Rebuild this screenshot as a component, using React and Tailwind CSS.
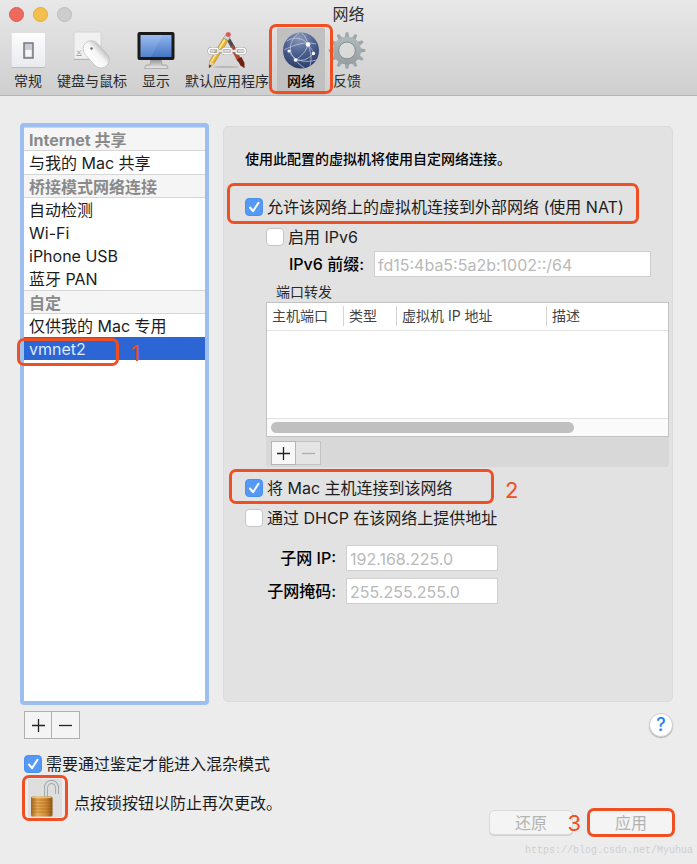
import React, { useId } from "react";

const FONT = "font-[Inter,'Noto_Sans_CJK_SC',sans-serif]";

function Mark({ className }) {
  return (
    <span
      aria-hidden="true"
      className={`pointer-events-none absolute rounded-[7px] border-[3px] border-[#f04e23] ${className}`}
    />
  );
}

function SwitchIcon() {
  return (
    <svg width="36" height="38" viewBox="0 0 36 38">
      <defs>
        <linearGradient id="sw" x1="0" y1="0" x2="0" y2="1">
          <stop offset="0" stopColor="#fcfcfd" />
          <stop offset="1" stopColor="#e9ebef" />
        </linearGradient>
      </defs>
      <rect x="1.5" y="3" width="33.5" height="34" rx="1" fill="#bdbdbd" />
      <rect x="1.5" y="2" width="33.5" height="34" rx="1" fill="url(#sw)" />
      <rect x="14" y="12" width="9" height="15" fill="#c9ccd4" stroke="#77777c" strokeWidth="1.5" />
      <rect x="15.5" y="19" width="6" height="6.5" fill="#f6f6f8" />
    </svg>
  );
}

function MouseIcon() {
  return (
    <svg width="38" height="38" viewBox="0 0 38 38">
      <defs>
        <linearGradient id="ms" x1="0" y1="0" x2="1" y2="0">
          <stop offset="0" stopColor="#ffffff" />
          <stop offset="0.6" stopColor="#f4f4f4" />
          <stop offset="1" stopColor="#c4c4c4" />
        </linearGradient>
      </defs>
      <rect x="1" y="1" width="27" height="27" rx="1.5" fill="#f1f1f1" stroke="#d4d4d4" />
      <path d="M1 28.500h27" stroke="#b5b5b5" />
      <path d="M4 19.5l4 4M8 19.5l-4 4M3.500 24.500h5" stroke="#8c8c8c" strokeWidth="0.8" />
      <rect x="15" y="8" width="16.5" height="31" rx="8.2" transform="rotate(-42 23 23.5)" fill="url(#ms)" stroke="#bdbdbd" strokeWidth="0.7" />
      <circle cx="18.5" cy="17.5" r="1.2" fill="#666" />
    </svg>
  );
}

function DisplayIcon() {
  return (
    <svg width="38" height="38" viewBox="0 0 38 38">
      <defs>
        <linearGradient id="dp" x1="0" y1="0" x2="0" y2="1">
          <stop offset="0" stopColor="#8fb6ee" />
          <stop offset="1" stopColor="#4474c4" />
        </linearGradient>
        <linearGradient id="ds" x1="0" y1="0" x2="0" y2="1">
          <stop offset="0" stopColor="#8e8e8e" />
          <stop offset="1" stopColor="#eeeeee" />
        </linearGradient>
      </defs>
      <path d="M14 28h10l1 6h4.500l1.500 3.500H7.500L9 34h4z" fill="url(#ds)" stroke="#9a9a9a" strokeWidth="0.7" />
      <rect x="0.500" y="1" width="37" height="28" rx="2" fill="#1a1a1a" />
      <rect x="3.500" y="4" width="31" height="22" fill="url(#dp)" />
      <path d="M3.500 4h22L14 26H3.500z" fill="#fff" opacity="0.1" />
    </svg>
  );
}

function AppsIcon() {
  return (
    <svg width="42" height="38" viewBox="0 0 42 38">
      <ellipse cx="20" cy="36" rx="13" ry="1" fill="#b8b8b8" />
      <path d="M20 7.500l3-2 9.500 16.500-3.500 2z" fill="#4a4b50" />
      <path d="M24 16l3-2 9 15-4.500 1.500z" fill="#b0472e" />
      <path d="M31 28.500l4.500-2.500 3 6v5.200l-4-2.700z" fill="#6d2013" />
      <path d="M17.500 7l4.500 2.500L8 32.500 3 37l.7-7z" fill="#e6b42e" stroke="#9c7020" strokeWidth="0.5" />
      <path d="M18.800 8.500L5.500 30.500" stroke="#ffe88e" strokeWidth="1.500" />
      <path d="M3.700 30L8 32.500 3 37z" fill="#ead1a0" />
      <path d="M3.300 33.500l2.400 1.200L3 37z" fill="#333" />
      <path d="M17.500 7l2-3.200 4.700 2.600-2 3.200z" fill="#d4d4d4" stroke="#8e8e8e" strokeWidth="0.500" />
      <rect x="19.800" y="1.200" width="5" height="4.500" rx="2" fill="#e05454" />
      <g fill="none" strokeWidth="2.600" stroke="#9a9a9a">
        <rect x="2.800" y="17.300" width="9.500" height="5.400" rx="2.700" />
        <rect x="16.300" y="17.300" width="9.500" height="5.400" rx="2.700" />
        <rect x="29.800" y="17.300" width="9.500" height="5.400" rx="2.700" />
      </g>
      <g fill="none" strokeWidth="1.600" stroke="#ffffff">
        <rect x="2.800" y="17.300" width="9.500" height="5.400" rx="2.700" />
        <rect x="16.300" y="17.300" width="9.500" height="5.400" rx="2.700" />
        <rect x="29.800" y="17.300" width="9.500" height="5.400" rx="2.700" />
      </g>
      <path d="M11.500 20h5.500M25 20h5.500" stroke="#9a9a9a" strokeWidth="2.600" strokeLinecap="round" />
      <path d="M11.500 20h5.500M25 20h5.500" stroke="#ffffff" strokeWidth="1.500" strokeLinecap="round" />
    </svg>
  );
}

function GlobeIcon() {
  return (
    <svg width="38" height="38" viewBox="0 0 38 38">
      <defs>
        <radialGradient id="gl" cx="0.450" cy="0.150" r="0.900">
          <stop offset="0" stopColor="#8a99b8" />
          <stop offset="0.500" stopColor="#4a5f90" />
          <stop offset="1" stopColor="#2a3a64" />
        </radialGradient>
      </defs>
      <circle cx="19" cy="19.500" r="18" fill="url(#gl)" />
      <g fill="none" stroke="#c9d3e8" strokeWidth="0.700">
        <path d="M5 10C12 5 22 7 26 13.500c4 5 6 8 5.500 9" />
        <path d="M2 19c10-5 20-9 32-6" />
        <path d="M17 2C8 8 5 20 13.500 29c3 4 6 6 9 8" />
        <path d="M7 20c4 8 12 13 28 9" />
        <path d="M20 2c3 3 5 7 6 11.500 3 8 4 14 2 21" />
        <path d="M13.500 29c6-4 11-9 12.500-15.500M13.500 29c7 1 12 0 18-6.500" />
      </g>
      <g fill="#fff">
        <circle cx="26" cy="13.500" r="2.300" />
        <circle cx="7" cy="20" r="1.600" />
        <circle cx="13.500" cy="29" r="1.800" />
        <circle cx="31.500" cy="22.500" r="1.700" />
      </g>
    </svg>
  );
}

const TEETH = [0, 30, 60, 90, 120, 150, 180, 210, 240, 270, 300, 330];

function GearIcon() {
  return (
    <svg width="38" height="38" viewBox="0 0 38 38">
      <defs>
        <linearGradient id="gr" x1="0" y1="0" x2="0" y2="38" gradientUnits="userSpaceOnUse">
          <stop offset="0" stopColor="#b4bec1" />
          <stop offset="1" stopColor="#939a9d" />
        </linearGradient>
      </defs>
      {TEETH.map((a) => (
        <path key={a} d="M16.500 8l1.200-6.800h2.600L21.500 8z" fill="#9ea6a9" transform={`rotate(${a} 19 19.500)`} />
      ))}
      <circle cx="19" cy="19.500" r="11" fill="none" stroke="url(#gr)" strokeWidth="6" />
      <circle cx="19" cy="19.500" r="8.400" fill="none" stroke="#858c8f" strokeWidth="0.900" />
    </svg>
  );
}

function LockIcon() {
  return (
    <svg width="32" height="38" viewBox="0 0 32 38">
      <defs>
        <linearGradient id="lk" x1="0" y1="0" x2="1" y2="0">
          <stop offset="0" stopColor="#a8681f" />
          <stop offset="0.300" stopColor="#e9ae55" />
          <stop offset="0.700" stopColor="#d18c33" />
          <stop offset="1" stopColor="#8e5415" />
        </linearGradient>
      </defs>
      <path d="M17 18V9c0-8 11-8 11 0v6" fill="none" stroke="#8f9799" strokeWidth="4" />
      <path d="M17 18V9c0-8 11-8 11 0v6" fill="none" stroke="#d7dcdd" strokeWidth="2.600" />
      <rect x="2" y="17.500" width="21.500" height="20" rx="1.500" fill="url(#lk)" />
      <path d="M2 21h21.500M2 24h21.500M2 27h21.500M2 30h21.500M2 33h21.500" stroke="#8c5214" strokeWidth="0.700" opacity="0.600" />
      <path d="M3 18.300h19.500" stroke="#f3c884" />
    </svg>
  );
}

function Check({ label, checked, mark }) {
  const id = useId();
  return (
    <div className="relative flex h-6 items-center gap-1">
      <span className="relative flex size-[18px] shrink-0">
        <input
          id={id}
          type="checkbox"
          defaultChecked={checked}
          className="peer size-full appearance-none rounded-[4px] border border-[#c6c6c6] bg-white checked:border-[#4a90ee] checked:bg-[#549af5]"
        />
        <svg viewBox="0 0 18 18" className="pointer-events-none absolute inset-0 hidden peer-checked:block">
          <path d="M5 9.500l3 3.700 5.500-8.400" fill="none" stroke="#fff" strokeWidth="2" strokeLinecap="round" strokeLinejoin="round" />
        </svg>
      </span>
      <label htmlFor={id} className="text-base leading-6 whitespace-nowrap text-[#1c1c1c]">{label}</label>
      {mark && <Mark className={mark} />}
    </div>
  );
}

function Field({ id, label, value, labelClass, inputClass }) {
  return (
    <div className="flex h-[26px] items-center gap-[10px]">
      <label htmlFor={id} className={`text-right text-base leading-6 font-medium whitespace-nowrap text-black ${labelClass}`}>{label}</label>
      <input
        id={id}
        type="text"
        disabled
        defaultValue={value}
        className={`h-[26px] min-w-0 border border-[#cfcfcf] bg-white px-[3px] pt-[2px] text-base text-[#b9b9b9] ${inputClass}`}
      />
    </div>
  );
}

function Sign({ plus }) {
  return (
    <svg width="15" height="15" viewBox="0 0 15 15" stroke="currentColor" strokeWidth="1.300">
      <path d={plus ? "M1 7.500h13M7.500 1v13" : "M1 7.500h13"} />
    </svg>
  );
}

const TOOLS = [
  { label: "常规", icon: SwitchIcon },
  { label: "键盘与鼠标", icon: MouseIcon },
  { label: "显示", icon: DisplayIcon },
  { label: "默认应用程序", icon: AppsIcon },
  { label: "网络", icon: GlobeIcon, active: true },
  { label: "反馈", icon: GearIcon },
];

const NETWORKS = [
  { label: "Internet 共享", head: true },
  { label: "与我的 Mac 共享" },
  { label: "桥接模式网络连接", head: true },
  { label: "自动检测" },
  { label: "Wi-Fi" },
  { label: "iPhone USB" },
  { label: "蓝牙 PAN" },
  { label: "自定", head: true },
  { label: "仅供我的 Mac 专用" },
  { label: "vmnet2", selected: true },
];

function Toolbar() {
  return (
    <header className="border-b border-[#b4b4b4] bg-gradient-to-b from-[#e8e8e8] to-[#cfcfcf]">
      <div className="grid h-7 grid-cols-[1fr_auto_1fr] items-center">
        <div className="flex gap-[9px] pl-[9px]">
          <button aria-label="关闭" className="size-[15px] rounded-full border border-[#df5c52] bg-[#ee6a5f]" />
          <button aria-label="最小化" className="size-[15px] rounded-full border border-[#e0ad3a] bg-[#f5bf4f]" />
          <button aria-label="缩放" className="size-[15px] rounded-full border border-[#bcbcbc] bg-[#cdcdcd]" />
        </div>
        <h1 className="text-base leading-6 text-[#2e2e2e]">网络</h1>
      </div>
      <nav className="flex gap-px pl-[7px]">
        {TOOLS.map(({ label, icon: Icon, active }) => (
          <button
            key={label}
            className={`relative flex h-[67px] flex-col items-center pt-[3px] text-sm leading-6 text-[#2a2a2a] ${
              active ? "w-12 bg-[#c0c0c0] font-medium text-black" : "px-[7px]"
            }`}
          >
            <span className="flex h-[38px] w-7 justify-center"><span className="shrink-0"><Icon /></span></span>
            <span className="whitespace-nowrap">{label}</span>
            {active && <Mark className="z-10 -inset-x-2 -top-1 bottom-px" />}
          </button>
        ))}
      </nav>
    </header>
  );
}

function NetworkList() {
  return (
    <ul className="w-[189px] shrink-0 rounded-[4px] border-4 border-[#9cbff0] bg-white text-base text-[#1c1c1c]">
      {NETWORKS.map(({ label, head, selected }) =>
        head ? (
          <li key={label} className="h-6 border-y border-[#d6d6d6] bg-[#f5f5f5] px-[5px] leading-6 font-bold text-[#8a8a8a]">{label}</li>
        ) : (
          <li key={label} className={`relative h-[23px] px-[5px] leading-[25px] ${selected ? "bg-[#2b66d4] text-[#dfe9fb]" : ""}`}>
            {label}
            {selected && (
              <>
                <Mark className="top-px -left-[7px] h-7 w-[102px]" />
                <span className="absolute top-1 left-[107px] text-[22px] leading-6 text-[#f04e23]">1</span>
              </>
            )}
          </li>
        )
      )}
    </ul>
  );
}

function PortForwarding() {
  return (
    <section className="ml-[21px] rounded-b-[4px] bg-[#d8d8d8]">
      <div className="border border-[#c2c2c2] bg-white">
        <table className="w-full table-fixed text-left text-sm text-[#444]">
          <thead>
            <tr className="h-[27px] border-b border-[#e2e2e2]">
              <th className="w-[76px] p-0 pl-[5px] font-normal">主机端口</th>
              <th className="w-[53px] p-0 font-normal"><div className="border-l border-[#d4d4d4] pl-[5px]">类型</div></th>
              <th className="w-[150px] p-0 font-normal"><div className="border-l border-[#d4d4d4] pl-[5px]">虚拟机 IP 地址</div></th>
              <th className="p-0 font-normal"><div className="border-l border-[#d4d4d4] pl-[5px]">描述</div></th>
            </tr>
          </thead>
          <tbody><tr className="h-[88px]"><td colSpan={4} /></tr></tbody>
        </table>
        <div className="border-t border-[#e2e2e2] bg-[#fafafa] px-1 py-[3px]">
          <div className="h-[11px] w-[77%] rounded-full bg-[#c0c0c0]" />
        </div>
      </div>
      <div className="flex px-[5px] pt-1 pb-[2px]">
        <button aria-label="添加端口" className="flex h-6 w-[25px] items-center justify-center border border-[#b5b5b5] bg-[#f8f8f8] text-[#222]"><Sign plus /></button>
        <button aria-label="删除端口" disabled className="flex h-6 w-[25px] items-center justify-center border border-l-0 border-[#c3c3c3] bg-[#e4e4e4] text-[#adadad]"><Sign /></button>
      </div>
    </section>
  );
}

function Settings() {
  return (
    <section className="my-[3px] min-w-0 flex-1 rounded-[5px] border border-[#dcdcdc] bg-[#e2e2e2] pt-5 pr-[3px] pl-[21px]">
      <p className="text-sm leading-6 font-medium text-black">使用此配置的虚拟机将使用自定网络连接。</p>
      <div className="mt-6">
        <Check label="允许该网络上的虚拟机连接到外部网络 (使用 NAT)" checked mark="-top-3 right-[30px] bottom-[-5px] -left-[18px]" />
      </div>
      <div className="mt-[6px] ml-[21px]"><Check label="启用 IPv6" /></div>
      <div className="mt-[2px] mr-[18px] ml-[43px]">
        <Field id="prefix" label="IPv6 前缀:" value="fd15:4ba5:5a2b:1002::/64" labelClass="w-[76px]" inputClass="flex-1" />
      </div>
      <h2 className="mt-1 ml-[31px] text-sm leading-[21px] text-[#2a2a2a]">端口转发</h2>
      <PortForwarding />
      <div className="relative mt-[9px] w-[249px]">
        <Check label="将 Mac 主机连接到该网络" checked mark="-top-[7px] right-0 -bottom-1 -left-4" />
        <span className="absolute top-[2px] left-[260px] text-[22px] leading-6 text-[#f04e23]">2</span>
      </div>
      <div className="mt-[6px]"><Check label="通过 DHCP 在该网络上提供地址" /></div>
      <div className="mt-[15px] flex flex-col gap-[7px]">
        <Field id="subnet" label="子网 IP:" value="192.168.225.0" labelClass="w-[91px]" inputClass="w-[152px]" />
        <Field id="mask" label="子网掩码:" value="255.255.255.0" labelClass="w-[91px]" inputClass="w-[152px]" />
      </div>
    </section>
  );
}

function Footer() {
  const btn = "h-[25px] rounded-[5px] border border-[#d9d9d9] bg-[#f4f4f4] text-base leading-[22px] text-[#b3b3b3] shadow-[0_1px_0_#d0d0d0]";
  return (
    <footer className="px-6">
      <div className="mt-[6px] flex items-center justify-between">
        <div className="flex">
          <button aria-label="添加网络" className="flex h-7 w-7 items-center justify-center border border-[#b0b0b0] bg-[#f4f4f4] text-[#222]"><Sign plus /></button>
          <button aria-label="删除网络" className="flex h-7 w-7 items-center justify-center border border-l-0 border-[#b0b0b0] bg-[#f4f4f4] text-[#222]"><Sign /></button>
        </div>
        <button aria-label="帮助" className="size-6 rounded-full border border-[#cfcfcf] bg-white text-lg leading-[22px] font-medium text-[#2f7bf0] shadow-[0_1px_1px_#b5b5b5]">?</button>
      </div>
      <div className="mt-[13px] -mb-px"><Check label="需要通过鉴定才能进入混杂模式" checked /></div>
      <div className="flex justify-between">
        <div className="flex items-center gap-2 self-start">
          <button aria-label="锁" className="relative flex h-[46px] w-[42px] items-center justify-center bg-[#dedede] bg-clip-content p-1">
            <LockIcon />
            <Mark className="-inset-x-[2px] inset-y-0" />
          </button>
          <span className="pt-[10px] text-base leading-6 whitespace-nowrap text-[#1c1c1c]">点按锁按钮以防止再次更改。</span>
        </div>
        <div className="flex gap-4 pt-[35px]">
          <button disabled className={`relative w-[84px] ${btn}`}>
            还原
            <span className="absolute top-0 -right-[9px] text-[22px] leading-6 text-[#f04e23]">3</span>
          </button>
          <button disabled className={`relative w-[84px] ${btn}`}>
            应用
            <Mark className="-inset-x-[3px] -inset-y-[3px]" />
          </button>
        </div>
      </div>
      <p className="-mr-5 mt-2 pb-[5px] text-right font-['Liberation_Mono',monospace] text-[10px] leading-4 text-[#cfcfcf]">https://blog.csdn.net/Myuhua</p>
    </footer>
  );
}

export default function App() {
  return (
    <div className={`flex min-h-screen flex-col bg-[#ececec] ${FONT}`}>
      <Toolbar />
      <main className="flex flex-1 gap-[14px] pt-[27px] pr-6 pl-5">
        <NetworkList />
        <Settings />
      </main>
      <Footer />
    </div>
  );
}
